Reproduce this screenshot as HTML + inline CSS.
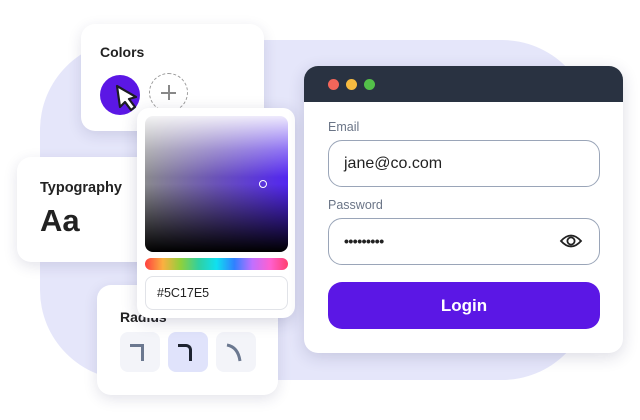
<!DOCTYPE html>
<html><head><style>
*{margin:0;padding:0;box-sizing:border-box}
body{width:640px;height:420px;background:#fff;position:relative;overflow:hidden;font-family:"Liberation Sans",sans-serif;color:#1f2328}
.abs{position:absolute}
.card{position:absolute;background:#fff;border-radius:14px;box-shadow:0 4px 14px rgba(40,40,90,.13)}
.blob{left:40px;top:40px;width:552px;height:340px;background:#e5e6fa;border-radius:90px}
h3{position:absolute;font-size:14px;font-weight:bold;color:#222}
.inp{position:absolute;left:24px;width:272px;height:47px;border:1px solid #9aa5b8;border-radius:14px;font-size:16px;padding-left:15px;line-height:45px;color:#222}
.lbl{position:absolute;left:24px;font-size:12.5px;color:#6b7587}
.tile{position:absolute;top:47px;width:40px;height:40px;border-radius:8px;background:#f3f4f9}
</style></head><body>
<div class="abs blob"></div>

<div class="card" style="left:81px;top:24px;width:183px;height:107px">
<h3 style="left:19px;top:20px">Colors</h3>
<div class="abs" style="left:19px;top:51px;width:40px;height:40px;border-radius:50%;background:#5b17e5"></div>
<svg class="abs" style="left:33px;top:60px" width="28" height="30" viewBox="0 0 28 30"><path d="M3 2 L6 23 L11 18 L17 26 L21 23 L15 15 L22 13 Z" fill="#fff" stroke="#1d1d24" stroke-width="2.2" stroke-linejoin="round"/></svg>
<div class="abs" style="left:68px;top:49px;width:39px;height:39px;border-radius:50%;border:1.3px dashed #999"></div>
<div class="abs" style="left:80px;top:68px;width:15px;height:1.5px;background:#888"></div>
<div class="abs" style="left:87px;top:61px;width:1.5px;height:15px;background:#888"></div>
</div>

<div class="card" style="left:17px;top:157px;width:140px;height:105px">
<h3 style="left:23px;top:23px;font-size:14.5px">Typography</h3>
<div class="abs" style="left:23px;top:46px;font-size:31px;font-weight:bold;color:#222">Aa</div>
</div>

<div class="card" style="left:97px;top:285px;width:181px;height:110px">
<h3 style="left:23px;top:24px">Radius</h3>
<div class="tile" style="left:23px"><div class="abs" style="left:10px;top:12px;width:14px;height:17px;border-top:3px solid #6b7890;border-right:3px solid #6b7890"></div></div>
<div class="tile" style="left:71px;background:#e0e3fb"><div class="abs" style="left:10px;top:12px;width:14px;height:17px;border-top:3px solid #1d2330;border-right:3px solid #1d2330;border-top-right-radius:6px"></div></div>
<div class="tile" style="left:119px"><svg class="abs" style="left:8px;top:10px" width="24" height="22"><path d="M3 3 Q14 5 16 19" fill="none" stroke="#6b7890" stroke-width="3"/></svg></div>
</div>

<div class="card" style="left:137px;top:108px;width:158px;height:210px;border-radius:12px;box-shadow:0 4px 16px rgba(40,40,90,.18)">
<div class="abs" style="left:8px;top:8px;width:143px;height:136px;border-radius:8px;background:linear-gradient(to bottom,rgba(255,255,255,.9),rgba(255,255,255,.35) 25%,rgba(255,255,255,0) 45%,rgba(0,0,0,0) 50%,rgba(0,0,0,.6) 80%,#000),linear-gradient(to right,#8a8a8e,#6a52b8 50%,#5226f0)"></div>
<div class="abs" style="left:122px;top:72px;width:8px;height:8px;border-radius:50%;border:1.3px solid #fff"></div>
<div class="abs" style="left:8px;top:150px;width:143px;height:12px;border-radius:6px;background:linear-gradient(to right,#ff4040,#fbb040,#8fd03c,#30d0a0,#10e0f0,#3080ff,#c070ff,#ff60d0,#ff4070)"></div>
<div class="abs" style="left:8px;top:168px;width:143px;height:34px;border:1px solid #e1e3e8;border-radius:8px;font-size:12.5px;line-height:32px;padding-left:11px;color:#222">#5C17E5</div>
</div>

<div class="card" style="left:304px;top:66px;width:319px;height:287px;box-shadow:0 4px 16px rgba(40,40,90,.16)">
<div class="abs" style="left:0;top:0;width:319px;height:36px;background:#293241;border-radius:14px 14px 0 0"></div>
<div class="abs" style="left:24px;top:13px;width:11px;height:11px;border-radius:50%;background:#f3665a"></div>
<div class="abs" style="left:42px;top:13px;width:11px;height:11px;border-radius:50%;background:#f6bb40"></div>
<div class="abs" style="left:60px;top:13px;width:11px;height:11px;border-radius:50%;background:#53c049"></div>
<div class="lbl" style="top:54px">Email</div>
<div class="inp" style="top:74px">jane@co.com</div>
<div class="lbl" style="top:132px">Password</div>
<div class="inp" style="top:152px;font-size:14px;letter-spacing:-0.5px;font-weight:bold">•••••••••</div>
<svg class="abs" style="left:255px;top:165px" width="24" height="20" viewBox="0 0 24 20"><path d="M2 10 Q12 -1 22 10 Q12 21 2 10 Z" fill="none" stroke="#222" stroke-width="1.8"/><circle cx="12" cy="10" r="3.6" fill="none" stroke="#222" stroke-width="1.8"/></svg>
<div class="abs" style="left:24px;top:216px;width:272px;height:47px;border-radius:14px;background:#5b17e5;color:#fff;font-size:17px;text-align:center;line-height:47px;font-weight:bold">Login</div>
</div>
</body></html>
